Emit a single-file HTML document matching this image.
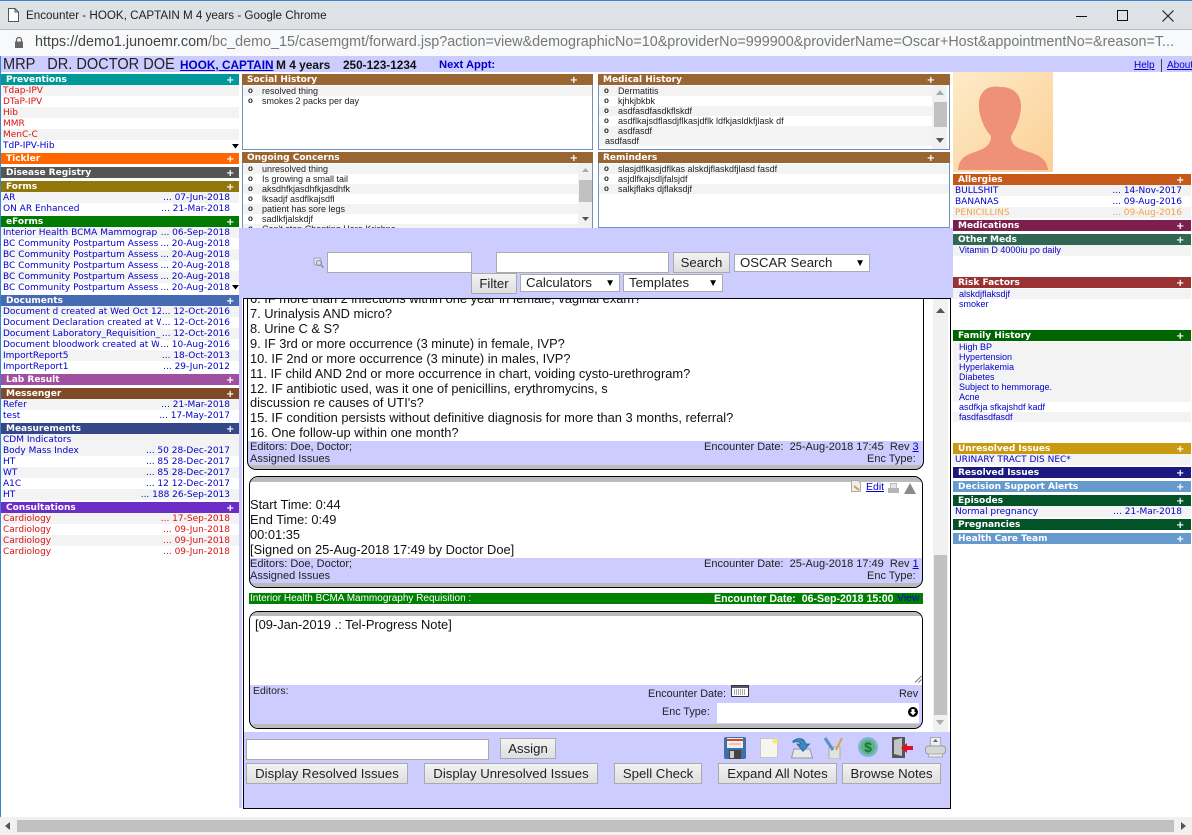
<!DOCTYPE html>
<html><head><meta charset="utf-8"><title>Encounter</title>
<style>
html,body{margin:0;padding:0;width:1192px;height:835px;overflow:hidden;background:#fff}
div,span,a,svg{position:absolute;white-space:nowrap}
i{font-style:normal}
#p{left:0;top:0;width:1192px;height:835px;overflow:hidden;font-family:"Liberation Sans",sans-serif}
.h{height:11px;font:bold 9px/11px "DejaVu Sans",sans-serif;color:#fff}
.h span{top:1px}
.l{left:1px;width:238px}.l span:first-child{left:5px}.l span+span{left:225px;font-size:10px}
.k{left:953px;width:238px}.k span:first-child{left:5px}.k span+span{left:223px;font-size:10px}
.c{height:11px;background:#996633;font:bold 9px/11px "DejaVu Sans",sans-serif;color:#fff}
.c span{top:1px;left:5px}.c span+span{left:auto;right:15px;font-size:10px}
.r{height:11px;font:9px/11px "DejaVu Sans",sans-serif;color:#0000cc}
.r span{top:1px;left:2px;z-index:1}.r span+span{left:auto;right:9px;padding-left:1px;z-index:2}
.l2{left:1px;width:238px}.k2{left:953px;width:238px}
.g{background:#f3f3f3}.rd{color:#dd1111}.or{color:#f5a442}
.f{height:10px;font:9px/10px "Liberation Sans",sans-serif;color:#0000cc;left:953px;width:238px}
.f span{left:6px;top:0}
.b{height:10px;font:9px/10px "Liberation Sans",sans-serif;color:#222}
.b span{top:0}
.b span:first-child{left:5px;font-size:8px;font-weight:bold}.b span+span{left:19px}
.box{background:#fff;border:1px solid #6f93c0;border-top:0;overflow:hidden}
.btn{height:19px;border:1px solid #aaa;background:linear-gradient(#f3f3f3,#dedede);font:13.2px/19px "Liberation Sans",sans-serif;color:#222;text-align:center}
.sel{height:16px;background:#fff;border:1px solid #aaa;font:13.2px/16px "Liberation Sans",sans-serif;color:#222}
.sel span{left:5px;top:0}.sel span+span{left:auto;right:4px;top:1px;font-size:10px;color:#000}
.inp{background:#fff;border:1px solid #aaa;height:19px}
.n{left:250px;font:12.85px/15px "Liberation Sans",sans-serif;color:#111}
.s{font:11px/11px "Liberation Sans",sans-serif;color:#222}
.note{left:249px;width:672px;background:#ccccff;border:1px solid #000;border-radius:9px;overflow:hidden}
</style></head><body><div id="p">

<!-- chrome -->
<div style="left:0;top:0;width:1192px;height:1px;background:#3a84c9"></div>
<div style="left:0;top:1px;width:1192px;height:28px;background:#dee1e6"></div>
<svg style="left:8px;top:8px" width="11" height="14" viewBox="0 0 11 14"><path d="M.5.5H7L10.5 4V13.5H.5ZM7 .5V4H10.5" fill="#fff" stroke="#555"/></svg>
<div style="left:26px;top:8px;font:11.65px/15px 'Liberation Sans',sans-serif;color:#222">Encounter - HOOK, CAPTAIN M 4 years - Google Chrome</div>
<div style="left:1076px;top:16px;width:11px;height:1px;background:#111"></div>
<div style="left:1117px;top:10px;width:9px;height:9px;border:1px solid #111"></div>
<svg style="left:1162px;top:10px" width="12" height="12"><path d="M.5.5L11.5 11.5M11.5.5L.5 11.5" stroke="#111" fill="none"/></svg>
<div style="left:0;top:29px;width:1192px;height:27px;background:#f8f9fa;border-top:1px solid #bbb;box-sizing:border-box"></div>
<svg style="left:14px;top:37px" width="10" height="11"><path d="M2.500 4.500V3a2.500 2.500 0 0 1 5 0V4.500" fill="none" stroke="#666" stroke-width="1.200"/><rect x="1" y="4.500" width="8" height="6.500" fill="#666"/></svg>
<div style="left:35px;top:34px;width:1140px;font:14.35px/17px 'Liberation Sans',sans-serif;color:#777;overflow:hidden"><i style="color:#444">https://demo1.junoemr.com</i>/bc_demo_15/casemgmt/forward.jsp?action=view&amp;demographicNo=10&amp;providerNo=999900&amp;providerName=Oscar+Host&amp;appointmentNo=&amp;reason=T...</div>

<!-- top lavender strip -->
<div style="left:1px;top:56px;width:1191px;height:16px;background:#ccccff"></div>
<div style="left:3px;top:56px;font:16px/17px 'Liberation Sans',sans-serif;color:#222;white-space:pre;transform:scaleX(.91);transform-origin:0 0">MRP   DR. DOCTOR DOE</div>
<a style="left:180px;top:58px;font:bold 11.8px/15px 'Liberation Sans',sans-serif;color:#0000cc;text-decoration:underline">HOOK, CAPTAIN</a>
<div style="left:276px;top:58px;font:bold 11.9px/15px 'Liberation Sans',sans-serif;color:#111">M 4 years</div>
<div style="left:343px;top:58px;font:bold 11.8px/15px 'Liberation Sans',sans-serif;color:#111">250-123-1234</div>
<div style="left:439px;top:58px;font:bold 11.2px/15px 'Liberation Sans',sans-serif;color:#0000cc">Next Appt:</div>
<a style="left:1134px;top:60px;font:10px/12px 'Liberation Sans',sans-serif;color:#0000cc;text-decoration:underline">Help</a>
<div style="left:1161px;top:59px;width:1px;height:13px;background:#445"></div>
<a style="left:1167px;top:60px;font:10px/12px 'Liberation Sans',sans-serif;color:#0000cc;text-decoration:underline">About</a>

<!-- left strip -->
<div style="left:239px;top:228px;width:3px;height:580px;background:#ccccff"></div>

<!-- left column -->
<div class="h l" style="top:74px;background:#009999"><span>Preventions</span><span>+</span></div>
<div class="r l2 rd g" style="top:85px"><span>Tdap-IPV</span></div>
<div class="r l2 rd" style="top:96px"><span>DTaP-IPV</span></div>
<div class="r l2 rd g" style="top:107px"><span>Hib</span></div>
<div class="r l2 rd" style="top:118px"><span>MMR</span></div>
<div class="r l2 rd g" style="top:129px"><span>MenC-C</span></div>
<div class="r l2" style="top:140px"><span>TdP-IPV-Hib</span></div>
<svg style="left:232px;top:144px" width="7" height="5"><path d="M0 0H7L3.5 4.500Z" fill="#000"/></svg>
<div class="h l" style="top:153px;background:#ff6600"><span>Tickler</span><span>+</span></div>
<div class="h l" style="top:167px;background:#555"><span>Disease Registry</span><span>+</span></div>
<div class="h l" style="top:181px;background:#917609"><span>Forms</span><span>+</span></div>
<div class="r l2 g" style="top:192px"><span>AR</span><span>... 07-Jun-2018</span></div>
<div class="r l2" style="top:203px"><span>ON AR Enhanced</span><span>... 21-Mar-2018</span></div>
<div class="h l" style="top:216px;background:#007a00"><span>eForms</span><span>+</span></div>
<div class="r l2 g" style="top:227px"><span>Interior Health BCMA Mammograp</span><span style="background:#f3f3f3">... 06-Sep-2018</span></div>
<div class="r l2" style="top:238px"><span>BC Community Postpartum Assess</span><span style="background:#fff">... 20-Aug-2018</span></div>
<div class="r l2 g" style="top:249px"><span>BC Community Postpartum Assess</span><span style="background:#f3f3f3">... 20-Aug-2018</span></div>
<div class="r l2" style="top:260px"><span>BC Community Postpartum Assess</span><span style="background:#fff">... 20-Aug-2018</span></div>
<div class="r l2 g" style="top:271px"><span>BC Community Postpartum Assess</span><span style="background:#f3f3f3">... 20-Aug-2018</span></div>
<div class="r l2" style="top:282px"><span>BC Community Postpartum Assess</span><span style="background:#fff">... 20-Aug-2018</span></div>
<svg style="left:232px;top:285px;z-index:3" width="7" height="5"><path d="M0 0H7L3.5 4.500Z" fill="#000"/></svg>
<div class="h l" style="top:295px;background:#476bb3"><span>Documents</span><span>+</span></div>
<div class="r l2 g" style="top:306px"><span>Document d created at Wed Oct 12</span><span style="background:#f3f3f3">... 12-Oct-2016</span></div>
<div class="r l2" style="top:317px"><span>Document Declaration created at Wed</span><span style="background:#fff">... 12-Oct-2016</span></div>
<div class="r l2 g" style="top:328px"><span>Document Laboratory_Requisition_</span><span style="background:#f3f3f3">... 12-Oct-2016</span></div>
<div class="r l2" style="top:339px"><span>Document bloodwork created at Wed</span><span style="background:#fff">... 10-Aug-2016</span></div>
<div class="r l2 g" style="top:350px"><span>ImportReport5</span><span>... 18-Oct-2013</span></div>
<div class="r l2" style="top:361px"><span>ImportReport1</span><span>... 29-Jun-2012</span></div>
<div class="h l" style="top:374px;background:#a050a0"><span>Lab Result</span><span>+</span></div>
<div class="h l" style="top:388px;background:#7e4a28"><span>Messenger</span><span>+</span></div>
<div class="r l2 g" style="top:399px"><span>Refer</span><span>... 21-Mar-2018</span></div>
<div class="r l2" style="top:410px"><span>test</span><span>... 17-May-2017</span></div>
<div class="h l" style="top:423px;background:#344887"><span>Measurements</span><span>+</span></div>
<div class="r l2 g" style="top:434px"><span>CDM Indicators</span></div>
<div class="r l2 g" style="top:445px"><span>Body Mass Index</span><span>... 50 28-Dec-2017</span></div>
<div class="r l2" style="top:456px"><span>HT</span><span>... 85 28-Dec-2017</span></div>
<div class="r l2 g" style="top:467px"><span>WT</span><span>... 85 28-Dec-2017</span></div>
<div class="r l2" style="top:478px"><span>A1C</span><span>... 12 12-Dec-2017</span></div>
<div class="r l2 g" style="top:489px"><span>HT</span><span>... 188 26-Sep-2013</span></div>
<div class="h l" style="top:502px;background:#6c2dc7"><span>Consultations</span><span>+</span></div>
<div class="r l2 rd g" style="top:513px"><span>Cardiology</span><span>... 17-Sep-2018</span></div>
<div class="r l2 rd" style="top:524px"><span>Cardiology</span><span>... 09-Jun-2018</span></div>
<div class="r l2 rd g" style="top:535px"><span>Cardiology</span><span>... 09-Jun-2018</span></div>
<div class="r l2 rd" style="top:546px"><span>Cardiology</span><span>... 09-Jun-2018</span></div>

<!-- centre boxes -->
<div class="c" style="left:242px;top:74px;width:351px"><span>Social History</span><span>+</span></div>
<div class="box" style="left:242px;top:85px;width:349px;height:64px">
 <div class="b g" style="left:0;top:1px;width:349px"><span>o</span><span>resolved thing</span></div>
 <div class="b" style="left:0;top:11px;width:349px"><span>o</span><span>smokes 2 packs per day</span></div>
</div>
<div class="c" style="left:598px;top:74px;width:352px"><span>Medical History</span><span>+</span></div>
<div class="box" style="left:598px;top:85px;width:350px;height:64px">
 <div class="b g" style="left:0;top:1px;width:333px"><span>o</span><span>Dermatitis</span></div>
 <div class="b" style="left:0;top:11px;width:333px"><span>o</span><span>kjhkjbkbk</span></div>
 <div class="b g" style="left:0;top:21px;width:333px"><span>o</span><span>asdfasdfasdkflskdf</span></div>
 <div class="b" style="left:0;top:31px;width:333px"><span>o</span><span>asdflkajsdflasdjflkasjdflk ldfkjasldkfjlask df</span></div>
 <div class="b g" style="left:0;top:41px;width:333px"><span>o</span><span>asdfasdf</span></div>
 <div class="b g" style="left:0;top:51px;width:333px"><span style="left:6px;font-weight:normal;font-size:9px">asdfasdf</span></div>
 <div style="left:333px;top:0;width:15px;height:64px;background:#f1f1f1"></div>
 <div style="left:335px;top:17px;width:13px;height:25px;background:#c1c1c1"></div>
 <svg style="left:337px;top:5px" width="8" height="5"><path d="M0 5L4 0L8 5Z" fill="#aaa"/></svg>
 <svg style="left:337px;top:53px" width="8" height="5"><path d="M0 0L4 5L8 0Z" fill="#555"/></svg>
</div>
<div class="c" style="left:242px;top:152px;width:351px"><span>Ongoing Concerns</span><span>+</span></div>
<div class="box" style="left:242px;top:163px;width:349px;height:65px;border-bottom:0">
 <div class="b g" style="left:0;top:1px;width:335px"><span>o</span><span>unresolved thing</span></div>
 <div class="b" style="left:0;top:11px;width:335px"><span>o</span><span>Is growing a small tail</span></div>
 <div class="b g" style="left:0;top:21px;width:335px"><span>o</span><span>aksdhfkjasdhfkjasdhfk</span></div>
 <div class="b" style="left:0;top:31px;width:335px"><span>o</span><span>lksadjf asdflkajsdfl</span></div>
 <div class="b g" style="left:0;top:41px;width:335px"><span>o</span><span>patient has sore legs</span></div>
 <div class="b" style="left:0;top:51px;width:335px"><span>o</span><span>sadlkfjalskdjf</span></div>
 <div class="b g" style="left:0;top:61px;width:335px"><span>o</span><span>Can't stop Chanting Hare Krishna</span></div>
 <div style="left:335px;top:0;width:14px;height:65px;background:#f1f1f1"></div>
 <div style="left:336px;top:17px;width:13px;height:22px;background:#c1c1c1"></div>
 <svg style="left:339px;top:5px" width="7" height="4"><path d="M0 4L3.500 0L7 4Z" fill="#aaa"/></svg>
 <svg style="left:339px;top:54px" width="7" height="4"><path d="M0 0L3.500 4L7 0Z" fill="#555"/></svg>
</div>
<div class="c" style="left:598px;top:152px;width:352px"><span>Reminders</span><span>+</span></div>
<div class="box" style="left:598px;top:163px;width:350px;height:64px">
 <div class="b g" style="left:0;top:1px;width:350px"><span>o</span><span>slasjdflkasjdflkas alskdjflaskdfjlasd fasdf</span></div>
 <div class="b" style="left:0;top:11px;width:350px"><span>o</span><span>asjdlfkajsdljfalsjdf</span></div>
 <div class="b g" style="left:0;top:21px;width:350px"><span>o</span><span>salkjflaks djflaksdjf</span></div>
</div>

<!-- search band -->
<div style="left:241px;top:228px;width:712px;height:70px;background:#ccccff"></div>
<svg style="left:313px;top:257px" width="11" height="11"><rect x="1" y="1" width="7" height="7" fill="#dde" stroke="#aab"/><circle cx="6" cy="6" r="2.500" fill="none" stroke="#889"/><path d="M8 8L10.500 10.500" stroke="#889" stroke-width="1.500"/></svg>
<div class="inp" style="left:327px;top:252px;width:143px"></div>
<div class="inp" style="left:496px;top:252px;width:171px"></div>
<div class="btn" style="left:673px;top:252px;width:55px">Search</div>
<div class="sel" style="left:734px;top:254px;width:134px"><span>OSCAR Search</span><span>▼</span></div>
<div class="btn" style="left:471px;top:273px;width:44px">Filter</div>
<div class="sel" style="left:520px;top:274px;width:98px"><span>Calculators</span><span>▼</span></div>
<div class="sel" style="left:623px;top:274px;width:98px"><span>Templates</span><span>▼</span></div>

<!-- notes -->
<div style="left:243px;top:298px;width:707px;height:1px;background:#000"></div>
<div style="left:243px;top:298px;width:1px;height:434px;background:#000"></div>
<div style="left:950px;top:298px;width:1px;height:434px;background:#000"></div>
<div style="left:933px;top:299px;width:15px;height:433px;background:#f1f1f1"></div>
<div style="left:934px;top:555px;width:13px;height:160px;background:#c1c1c1"></div>
<svg style="left:936px;top:308px" width="9" height="5"><path d="M0 5L4.500 0L9 5Z" fill="#555"/></svg>
<svg style="left:936px;top:720px" width="8" height="5"><path d="M0 0L4 5L8 0Z" fill="#aaa"/></svg>

<div style="left:244px;top:299px;width:680px;height:171px;overflow:hidden">
 <div style="left:3px;top:-8px;width:675px;height:177px;background:#ccccff;border:1px solid #000;border-radius:9px;overflow:hidden">
  <div style="left:0;top:0;width:675px;height:149px;background:#fff"></div>
  <div style="left:0;top:173px;width:675px;height:4px;background:#bbb"></div>
 </div>
</div>
<div class="n" style="top:299px;height:7px;overflow:hidden"><span style="position:static;display:block;margin-top:-8px">6. IF  more than 2 infections within one year in female, vaginal exam?</span></div>
<div class="n" style="top:306px">7. Urinalysis AND micro?</div>
<div class="n" style="top:321px">8. Urine C &amp; S?</div>
<div class="n" style="top:336px">9. IF 3rd or more occurrence (3 minute) in female, IVP?</div>
<div class="n" style="top:351px">10. IF 2nd or more occurrence (3 minute) in males, IVP?</div>
<div class="n" style="top:366px">11. IF child AND 2nd or more occurrence in chart, voiding cysto-urethrogram?</div>
<div class="n" style="top:381px">12. IF antibiotic used, was it one of penicillins, erythromycins, s</div>
<div class="n" style="top:395px">discussion re causes of UTI's?</div>
<div class="n" style="top:410px">15. IF condition persists without definitive diagnosis for more than 3 months, referral?</div>
<div class="n" style="top:425px">16. One follow-up within one month?</div>
<div class="s" style="left:250px;top:442px">Editors: Doe, Doctor;</div>
<div class="s" style="left:250px;top:454px">Assigned Issues</div>
<div class="s" style="left:704px;top:442px;white-space:pre">Encounter Date:  25-Aug-2018 17:45  Rev <a style="position:static;color:#0000cc;text-decoration:underline">3</a></div>
<div class="s" style="left:867px;top:454px">Enc Type:</div>

<div class="note" style="top:476px;height:110px">
 <div style="left:0;top:0;width:672px;height:5px;background:#bbb"></div>
 <div style="left:0;top:5px;width:672px;height:76px;background:#fff"></div>
 <div style="left:0;top:106px;width:672px;height:4px;background:#bbb"></div>
</div>
<svg style="left:851px;top:480px" width="10" height="12"><path d="M.5.5H7L9.500 3V11.500H.5Z" fill="#eee" stroke="#aaa"/><path d="M3 6L8 10" stroke="#c9a24a" stroke-width="2"/></svg>
<a style="left:866px;top:481px;font:10.5px/13px 'Liberation Sans',sans-serif;color:#0000cc;text-decoration:underline">Edit</a>
<svg style="left:888px;top:483px" width="11" height="11"><rect x="2.500" y=".5" width="6" height="5" fill="#e4e4e4" stroke="#bbb"/><rect x="0" y="5" width="11" height="5" fill="#b5b5b5"/></svg>
<svg style="left:904px;top:483px" width="12" height="11"><path d="M0 11L6 0L12 11Z" fill="#8a8a8a"/></svg>
<div class="n" style="top:497px">Start Time: 0:44</div>
<div class="n" style="top:512px">End Time: 0:49</div>
<div class="n" style="top:527px">00:01:35</div>
<div class="n" style="top:542px">[Signed on 25-Aug-2018 17:49 by Doctor Doe]</div>
<div class="s" style="left:250px;top:559px">Editors: Doe, Doctor;</div>
<div class="s" style="left:250px;top:571px">Assigned Issues</div>
<div class="s" style="left:704px;top:559px;white-space:pre">Encounter Date:  25-Aug-2018 17:49  Rev <a style="position:static;color:#0000cc;text-decoration:underline">1</a></div>
<div class="s" style="left:867px;top:571px">Enc Type:</div>

<div style="left:249px;top:593px;width:674px;height:11px;background:#008000"></div>
<div style="left:250px;top:593px;font:10px/11px 'Liberation Sans',sans-serif;color:#fff">Interior Health BCMA Mammography Requisition :</div>
<div style="left:714px;top:593px;font:bold 10.6px/12px 'Liberation Sans',sans-serif;color:#fff;white-space:pre">Encounter Date:  06-Sep-2018 15:00</div>
<div style="left:897px;top:593px;font:10.500px/11px 'Liberation Sans',sans-serif;color:#0000dd">View</div>

<div class="note" style="top:611px;height:116px">
 <div style="left:0;top:0;width:672px;height:4px;background:#bbb"></div>
 <div style="left:0;top:4px;width:672px;height:69px;background:#fff"></div>
 <div style="left:0;top:112px;width:672px;height:4px;background:#bbb"></div>
</div>
<div class="n" style="left:255px;top:617px;font-size:12.9px">[09-Jan-2019 .: Tel-Progress Note]</div>
<svg style="left:914px;top:675px" width="8" height="8"><path d="M7.500 1L1 7.500M7.500 4.500L4.500 7.500" stroke="#777"/></svg>
<div class="s" style="left:253px;top:686px;font-size:10.500px">Editors:</div>
<div class="s" style="left:648px;top:689px;font-size:10.800px">Encounter Date:</div>
<svg style="left:731px;top:685px" width="18" height="12"><rect x=".5" y=".5" width="17" height="11" fill="#fff" stroke="#334"/><rect x="1" y="1" width="16" height="2" fill="#556"/><path d="M3 5H15M3 7H15M3 9H15" stroke="#556" stroke-dasharray="1 1"/></svg>
<div class="s" style="left:899px;top:689px;font-size:10.800px">Rev</div>
<div class="s" style="left:662px;top:707px;font-size:10.800px">Enc Type:</div>
<div style="left:717px;top:703px;width:202px;height:20px;background:#fff"></div>
<svg style="left:908px;top:707px" width="10" height="10"><circle cx="5" cy="5" r="5" fill="#000"/><path d="M3.500 2H6.500V5H8L5 8.500L2 5H3.500Z" fill="#fff"/></svg>

<!-- bottom panel -->
<div style="left:243px;top:732px;width:706px;height:76px;background:#ccccff;border:1px solid #000;border-top:0"></div>
<div class="inp" style="left:246px;top:739px;width:241px"></div>
<div class="btn" style="left:500px;top:738px;width:54px">Assign</div>
<div class="btn" style="left:246px;top:763px;width:160px">Display Resolved Issues</div>
<div class="btn" style="left:424px;top:763px;width:172px">Display Unresolved Issues</div>
<div class="btn" style="left:614px;top:763px;width:86px">Spell Check</div>
<div class="btn" style="left:718px;top:763px;width:117px">Expand All Notes</div>
<div class="btn" style="left:842px;top:763px;width:97px">Browse Notes</div>

<svg style="left:724px;top:737px" width="22" height="22"><rect x="0" y="0" width="22" height="22" rx="2" fill="#3f6fa8"/><rect x="3" y="1" width="16" height="10" fill="#f4efe6"/><rect x="3" y="2" width="16" height="2" fill="#d8453a"/><path d="M5 7H17" stroke="#d99"/><rect x="5" y="13" width="12" height="9" fill="#444"/><rect x="6" y="14" width="4" height="7" fill="#ccc"/></svg>
<svg style="left:760px;top:738px" width="18" height="20"><path d="M.5.5H14L17.500 4V19.500H.5Z" fill="#f6f5ee" stroke="#c8c8c8"/><circle cx="15" cy="3" r="2.500" fill="#ffe96b"/></svg>
<svg style="left:791px;top:737px" width="22" height="22"><path d="M3 12H19L21.500 21H.5Z" fill="#e8e8e8" stroke="#999"/><path d="M5 8H17" stroke="#bbb"/><path d="M2 4C7 0 14 1 14.500 7H18.500L12 14.500L6 7H9.500C9.500 5 6 4 2 5.500Z" fill="#3a88c4" stroke="#1b5a8a" stroke-width=".7"/></svg>
<svg style="left:824px;top:737px" width="19" height="22"><rect x="5" y="10" width="11" height="12" fill="#e2e2e2" stroke="#aaa"/><path d="M1 1L9 13" stroke="#5a8fc9" stroke-width="3"/><path d="M18 1L12 13" stroke="#d2a93e" stroke-width="2"/></svg>
<svg style="left:858px;top:737px" width="20" height="20"><circle cx="10" cy="10" r="10" fill="#7fb4d8"/><circle cx="10" cy="10" r="7.500" fill="#5fb37a"/><text x="10" y="15" font-family="Liberation Sans" font-weight="bold" font-size="14" text-anchor="middle" fill="#12793f">$</text></svg>
<svg style="left:892px;top:737px" width="22" height="21"><path d="M0 0H13V21H0Z" fill="#555"/><path d="M2 3L10 1V19L2 17Z" fill="#c4c4c4"/><path d="M9 11L15 6V9H21V13H15V16Z" fill="#e0102a"/></svg>
<svg style="left:925px;top:737px" width="21" height="21"><rect x="5.500" y=".5" width="10" height="9" fill="#eee" stroke="#aaa"/><path d="M10.500 2L13 5H8Z" fill="#666"/><rect x=".5" y="9" width="20" height="8" rx="3" fill="#d6d6d6" stroke="#999"/><rect x="3.500" y="17" width="14" height="3" fill="#eee" stroke="#aaa"/></svg>

<!-- right column -->
<svg style="left:953px;top:72px" width="100" height="100" viewBox="0 0 100 100"><defs><linearGradient id="pg" x1="0" y1="0" x2="1" y2="1"><stop offset="0" stop-color="#fdebc8"/><stop offset="1" stop-color="#fbcf95"/></linearGradient></defs><rect width="100" height="100" fill="url(#pg)"/><path d="M5 98C6 88 10 84 22 80C34 76 38 72 38 64C32 58 25 44 26 30C28 16 38 13 48 15C60 15 68 22 68 34C68 46 62 58 58 64C58 72 62 76 76 80C90 84 94 90 95 98Z" fill="#ef9079"/></svg>
<div class="h k" style="top:174px;background:#c6591a"><span>Allergies</span><span>+</span></div>
<div class="r k2 g" style="top:185px"><span style="left:2px">BULLSHIT</span><span>... 14-Nov-2017</span></div>
<div class="r k2" style="top:196px"><span style="left:2px">BANANAS</span><span>... 09-Aug-2016</span></div>
<div class="r k2 g or" style="top:207px"><span style="left:2px">PENICILLINS</span><span>... 09-Aug-2016</span></div>
<div class="h k" style="top:220px;background:#7d1f4d"><span>Medications</span><span>+</span></div>
<div class="h k" style="top:234px;background:#306754"><span>Other Meds</span><span>+</span></div>
<div class="f g" style="top:245px;height:11px"><span>Vitamin D 4000iu po daily</span></div>
<div class="h k" style="top:277px;background:#993333"><span>Risk Factors</span><span>+</span></div>
<div class="f g" style="top:289px"><span>alskdjflaksdjf</span></div>
<div class="f" style="top:299px"><span>smoker</span></div>
<div class="h k" style="top:330px;background:#006600"><span>Family History</span><span>+</span></div>
<div class="f g" style="top:342px"><span>High BP</span></div>
<div class="f g" style="top:352px"><span>Hypertension</span></div>
<div class="f g" style="top:362px"><span>Hyperlakemia</span></div>
<div class="f g" style="top:372px"><span>Diabetes</span></div>
<div class="f g" style="top:382px"><span>Subject to hemmorage.</span></div>
<div class="f g" style="top:392px"><span>Acne</span></div>
<div class="f" style="top:402px"><span>asdfkja sfkajshdf kadf</span></div>
<div class="f g" style="top:412px"><span>fasdfasdfasdf</span></div>
<div class="h k" style="top:443px;background:#c99a10"><span>Unresolved Issues</span><span>+</span></div>
<div class="r k2 g" style="top:454px"><span style="left:2px">URINARY TRACT DIS NEC*</span></div>
<div class="h k" style="top:467px;background:#1a1a80"><span>Resolved Issues</span><span>+</span></div>
<div class="h k" style="top:481px;background:#6699cc"><span>Decision Support Alerts</span><span>+</span></div>
<div class="h k" style="top:495px;background:#045228"><span>Episodes</span><span>+</span></div>
<div class="r k2 g" style="top:506px"><span style="left:2px">Normal pregnancy</span><span>... 21-Mar-2018</span></div>
<div class="h k" style="top:519px;background:#045228"><span>Pregnancies</span><span>+</span></div>
<div class="h k" style="top:533px;background:#6699cc"><span>Health Care Team</span><span>+</span></div>

<!-- window edges and bottom scrollbar -->
<div style="left:0;top:56px;width:1px;height:779px;background:#3a84c9"></div>
<div style="left:0;top:817px;width:1192px;height:18px;background:#f1f1f1"></div>
<div style="left:17px;top:820px;width:1157px;height:12px;background:#c1c1c1"></div>
<svg style="left:5px;top:822px" width="5" height="8"><path d="M5 0L0 4L5 8Z" fill="#555"/></svg>
<svg style="left:1181px;top:822px" width="5" height="8"><path d="M0 0L5 4L0 8Z" fill="#555"/></svg>
</div></body></html>
